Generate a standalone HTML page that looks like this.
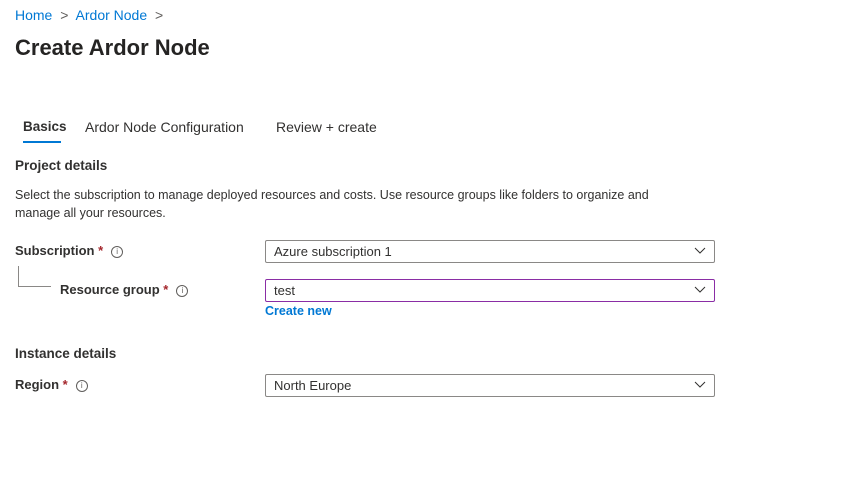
<!DOCTYPE html>
<html><head><meta charset="utf-8"><style>
body{margin:0;width:844px;height:492px;background:#fff;font-family:"Liberation Sans",sans-serif;color:#323130;position:relative;overflow:hidden}
.a{position:absolute;white-space:nowrap}
.blue{color:#0078d4}
.b{font-weight:bold}
.req{color:#a4262c}
.info{display:inline-block;width:10px;height:10px;border:1px solid #605e5c;border-radius:50%;font-size:8px;line-height:10px;text-align:center;color:#605e5c;vertical-align:1px;margin-left:8px;font-weight:normal}
.box{position:absolute;left:265px;width:440px;height:21px;border:1px solid #8a8886;border-radius:2px;font-size:13px;line-height:21px;padding-left:8px;box-sizing:content-box}
.box svg{position:absolute;right:8px;top:6px}
</style></head><body>
<div class="a blue" style="left:15px;top:7px;font-size:14px">Home <span style="color:#605e5c;margin:0 4px">&gt;</span> Ardor Node <span style="color:#605e5c;margin:0 4px">&gt;</span></div>
<div class="a b" style="left:15px;top:35px;font-size:22px;color:#252423">Create Ardor Node</div>
<div class="a" style="left:23px;top:119px;font-size:13.5px;color:#323130"><span class="b">Basics</span></div>
<div class="a" style="left:23px;top:141px;width:38px;height:2px;background:#0078d4"></div>
<div class="a" style="left:85px;top:119px;font-size:14px">Ardor Node Configuration</div>
<div class="a" style="left:276px;top:119px;font-size:14px">Review + create</div>
<div class="a b" style="left:15px;top:158px;font-size:13.5px">Project details</div>
<div class="a" style="left:15px;top:186px;font-size:12.5px;line-height:18px">Select the subscription to manage deployed resources and costs. Use resource groups like folders to organize and<br>manage all your resources.</div>
<div class="a b" style="left:15px;top:243px;font-size:13px">Subscription <span class="req">*</span><span class="info">i</span></div>
<div class="a" style="left:18px;top:266px;width:32px;height:20px;border-left:1px solid #8a8886;border-bottom:1px solid #8a8886"></div>
<div class="a b" style="left:60px;top:282px;font-size:13px">Resource group <span class="req">*</span><span class="info">i</span></div>
<div class="box" style="top:240px">Azure subscription 1<svg width="12" height="8"><path d="M1 1l5 5 5-5" fill="none" stroke="#323130"/></svg></div>
<div class="box" style="top:279px;border-color:#8a2da5">test<svg width="12" height="8"><path d="M1 1l5 5 5-5" fill="none" stroke="#323130"/></svg></div>
<div class="a b blue" style="left:265px;top:304px;font-size:12.5px">Create new</div>
<div class="a b" style="left:15px;top:346px;font-size:13.5px">Instance details</div>
<div class="a b" style="left:15px;top:377px;font-size:13px">Region <span class="req">*</span><span class="info">i</span></div>
<div class="box" style="top:374px">North Europe<svg width="12" height="8"><path d="M1 1l5 5 5-5" fill="none" stroke="#323130"/></svg></div>
</body></html>
